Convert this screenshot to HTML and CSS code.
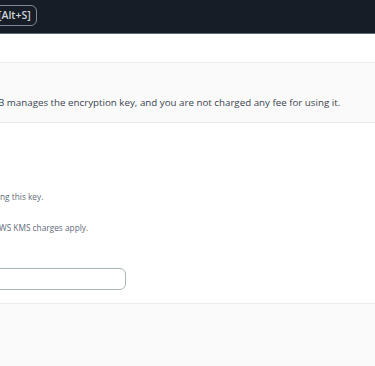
FILE: index.html
```html
<!DOCTYPE html>
<html lang="en">
<head>
    <meta charset="UTF-8">
    <meta name="viewport" content="width=device-width, initial-scale=1.0">
    <title>Encryption at rest</title>
    <link rel="stylesheet" href="styles.css">
</head>
<body>

    <!-- Top navigation, search shortcut is all that shows here -->
    <header class="topnav">
        <span class="shortcut">[Alt+S]</span>
    </header>

    <main class="page">
        <div class="info-box">
            <p class="info-text">B manages the encryption key, and you are not charged any fee for using it.</p>
        </div>

        <section class="options">
            <p class="hint">ng this key.</p>
            <p class="hint hint-kms">WS KMS charges apply.</p>
            <input type="text" class="key-input" aria-label="KMS key">
        </section>

        <div class="footer-bar"></div>
    </main>

</body>
</html>
```

FILE: styles.css
```css
body { margin: 0; font-family: "Open Sans", Arial, sans-serif; background: #fff; overflow: hidden; }
p { margin: 0; }

.topnav {
    height: 33px;
    background-color: #161d26;
    border-bottom: 1px solid #5f6b7a;
    display: flex;
    align-items: flex-start;
}
.shortcut {
    margin-top: 5px;
    margin-left: -8px;
    height: 19px;
    line-height: 19px;
    padding: 0 5px 0 5px;
    border: 1px solid #7d8998;
    border-radius: 6px;
    color: #d1d5db;
    font-size: 10.5px;
    font-weight: 600;
}

.page { margin-top: 28px; }

.info-box {
    background-color: #fafafa;
    border-top: 1px solid #e9ebed;
    border-bottom: 1px solid #e9ebed;
    padding: 32px 0 11px;
}
.info-text {
    font-size: 9.75px;
    line-height: 16px;
    color: #3b4450;
    text-indent: -2px;
    white-space: nowrap;
}

.options { padding: 67px 0 13px; }
.hint {
    font-size: 8.3px;
    line-height: 14px;
    color: #5f6b7a;
    white-space: nowrap;
}
.hint-kms { margin-top: 17px; text-indent: -1px; }

.key-input {
    display: block;
    margin: 33px 0 0 -10px;
    width: 136px;
    height: 22px;
    box-sizing: border-box;
    border: 1px solid #aab7b8;
    border-radius: 6px;
    background: #fff;
}

.footer-bar {
    height: 80px;
    background-color: #fafafa;
    border-top: 1px solid #e9ebed;
}
```
